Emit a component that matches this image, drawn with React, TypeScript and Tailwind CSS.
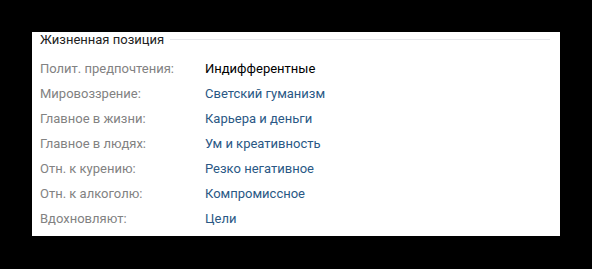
const rows: { label: string; value: string; link: boolean }[] = [
  { label: "Полит. предпочтения:", value: "Индифферентные", link: false },
  { label: "Мировоззрение:", value: "Светский гуманизм", link: true },
  { label: "Главное в жизни:", value: "Карьера и деньги", link: true },
  { label: "Главное в людях:", value: "Ум и креативность", link: true },
  { label: "Отн. к курению:", value: "Резко негативное", link: true },
  { label: "Отн. к алкоголю:", value: "Компромиссное", link: true },
  { label: "Вдохновляют:", value: "Цели", link: true },
];

export default function App() {
  return (
    <div className="w-[592px] h-[269px] bg-black pt-[32px] pl-[32px] font-['Roboto',sans-serif]">
      <div className="w-[528px] h-[204px] bg-white pl-[8px] pr-[10px]">
        {/* section header */}
        <div className="flex items-center h-[16px]">
          <span className="text-[13px] leading-[16px] text-[#222222]">Жизненная позиция</span>
          <div className="flex-1 h-px bg-[#e7e8ec] ml-[6px] -mt-[2px]" />
        </div>

        <div className="mt-[8px]">
          {rows.map((r) => (
            <div key={r.label} className="flex h-[25px] text-[13px] leading-[25px]">
              <div className="w-[165px] shrink-0 text-[#828282]">{r.label}</div>
              <div className={r.link ? "text-[#2a5885]" : "text-black"}>{r.value}</div>
            </div>
          ))}
        </div>
      </div>
    </div>
  );
}
